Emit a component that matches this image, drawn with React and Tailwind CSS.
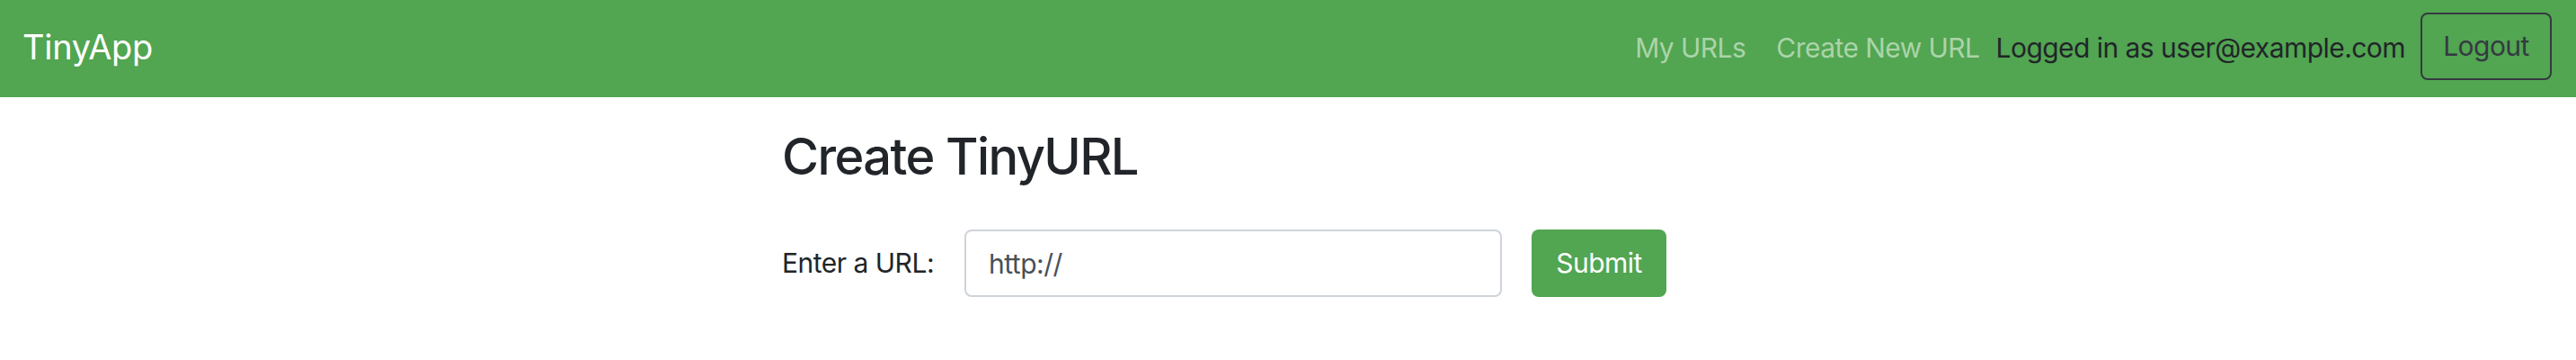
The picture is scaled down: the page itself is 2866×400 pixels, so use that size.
export default function App() {
  return (
    <div className="min-h-screen bg-white font-['Inter','Liberation_Sans',sans-serif] text-[#212529]">
      <nav className="h-[108px] bg-[#52a551] pl-[25px] pr-[27px] pt-[14px] pb-[19px] flex items-center">
        <span className="text-[38px] text-white leading-none tracking-[-0.3px]">TinyApp</span>
        <div className="ml-auto flex items-center text-[30px] tracking-[-0.55px]">
          <a className="text-[#abd4a9] mt-[4px]">My URLs</a>
          <a className="text-[#abd4a9] mt-[4px] ml-[34px]">Create New URL</a>
          <span className="text-[#212529] mt-[4px] ml-[18px]">Logged in as user@example.com</span>
          <button className="ml-[17px] h-[75px] w-[146px] rounded-[8px] border-2 border-[#343a40] text-[#343a40]">
            Logout
          </button>
        </div>
      </nav>
      <main className="mx-auto w-[1126px]">
        <h2 className="mt-[33px] text-[56px] font-medium leading-[1.2] tracking-[-1.6px]">Create TinyURL</h2>
        <form className="mt-[47px] flex items-center text-[30px] tracking-[-0.5px]" onSubmit={e => e.preventDefault()}>
          <label>Enter a URL:</label>
          <input
            type="text"
            defaultValue="http://"
            className="ml-[34px] h-[75px] w-[598px] rounded-[8px] border-2 border-[#ced4da] px-[25px] text-[#495057] outline-none"
          />
          <button className="ml-[33px] h-[75px] w-[150px] rounded-[8px] bg-[#52a551] text-white">
            Submit
          </button>
        </form>
      </main>
    </div>
  )
}
